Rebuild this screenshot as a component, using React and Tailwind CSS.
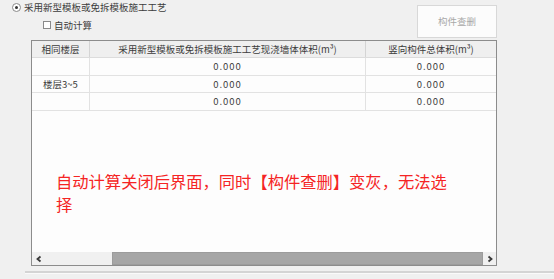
const font = { fontFamily: '"Noto Sans CJK SC", "Noto Sans", sans-serif' };

const rows = [
  { floor: "", a: "0.000", b: "0.000" },
  { floor: "楼层3~5", a: "0.000", b: "0.000" },
  { floor: "", a: "0.000", b: "0.000" },
];

function Chevron({ dir }) {
  return (
    <svg width="8" height="8" viewBox="0 0 8 8">
      <path
        d={dir === "left" ? "M5.5 1.5 L2.5 4 L5.5 6.5" : "M2.5 1.5 L5.5 4 L2.5 6.5"}
        fill="none"
        stroke="#3a3a3a"
        strokeWidth="1.8"
      />
    </svg>
  );
}

export default function App() {
  return (
    <div
      className="w-[554px] h-[279px] bg-[#f0f0f0] text-[9.5px] text-[#3c3c3c] flex flex-col overflow-hidden"
      style={font}
    >
      {/* top options and button */}
      <div className="flex justify-between h-[40px]">
        <div className="flex flex-col pl-[12px]">
          <div className="flex items-center gap-[2px] h-[15px]">
            <span className="w-[9px] h-[9px] rounded-full border border-[#8a8a8a] bg-white flex items-center justify-center">
              <span className="w-[3px] h-[3px] rounded-full bg-[#333]" />
            </span>
            <span className="ml-[1px]">采用新型模板或免拆模板施工工艺</span>
          </div>
          <div className="flex items-center h-[12px] mt-[4px] pl-[31px] gap-[3px]">
            <span className="w-[8px] h-[8px] border border-[#8a8a8a] bg-white" />
            <span>自动计算</span>
          </div>
        </div>
        <div className="mr-[57px] mt-[5px] w-[80px] h-[33px] bg-[#fcfcfc] border border-[#d8d8d8] flex items-center justify-center text-[#a8a8a8]">
          构件查删
        </div>
      </div>

      {/* table */}
      <div className="ml-[31px] w-[466px] h-[226px] border border-[#8c8c8c] bg-[#fdfdfd] flex flex-col">
        <div className="flex h-[17px] bg-[#efefef] border-b border-[#dcdcdc]">
          <div className="w-[58px] border-r border-[#d4d4d4] flex items-center justify-center">相同楼层</div>
          <div className="w-[276px] border-r border-[#d4d4d4] flex items-center justify-center">
            采用新型模板或免拆模板施工工艺现浇墙体体积(m³)
          </div>
          <div className="flex-1 flex items-center justify-center">竖向构件总体积(m³)</div>
        </div>
        {rows.map((r, i) => (
          <div key={i} className="flex h-[17.6px] border-b border-[#e2e2e2]">
            <div className="w-[58px] border-r border-[#e2e2e2] flex items-center justify-center">{r.floor}</div>
            <div className="w-[276px] border-r border-[#e2e2e2] flex items-center justify-center tracking-[1px]">{r.a}</div>
            <div className="flex-1 flex items-center justify-center tracking-[1px]">{r.b}</div>
          </div>
        ))}
        <div className="flex-1 pl-[24px] pt-[59px]">
          <p className="w-[400px] text-[16.3px] leading-[23px] text-[#f52424]">
            自动计算关闭后界面，同时【构件查删】变灰，无法选择
          </p>
        </div>
        <div className="h-[13px] flex bg-[#f0f0f0]">
          <div className="w-[13px] flex items-center justify-center">
            <Chevron dir="left" />
          </div>
          <div className="w-[67px]" />
          <div className="flex-1 bg-[#a6a6a6] border border-[#9c9c9c]" />
          <div className="w-[13px] flex items-center justify-center">
            <Chevron dir="right" />
          </div>
        </div>
      </div>

      <div className="ml-[25px] mt-[5px] h-[3px] border-t-2 border-[#d4d4d4] border-b border-b-[#fafafa]" />
    </div>
  );
}
